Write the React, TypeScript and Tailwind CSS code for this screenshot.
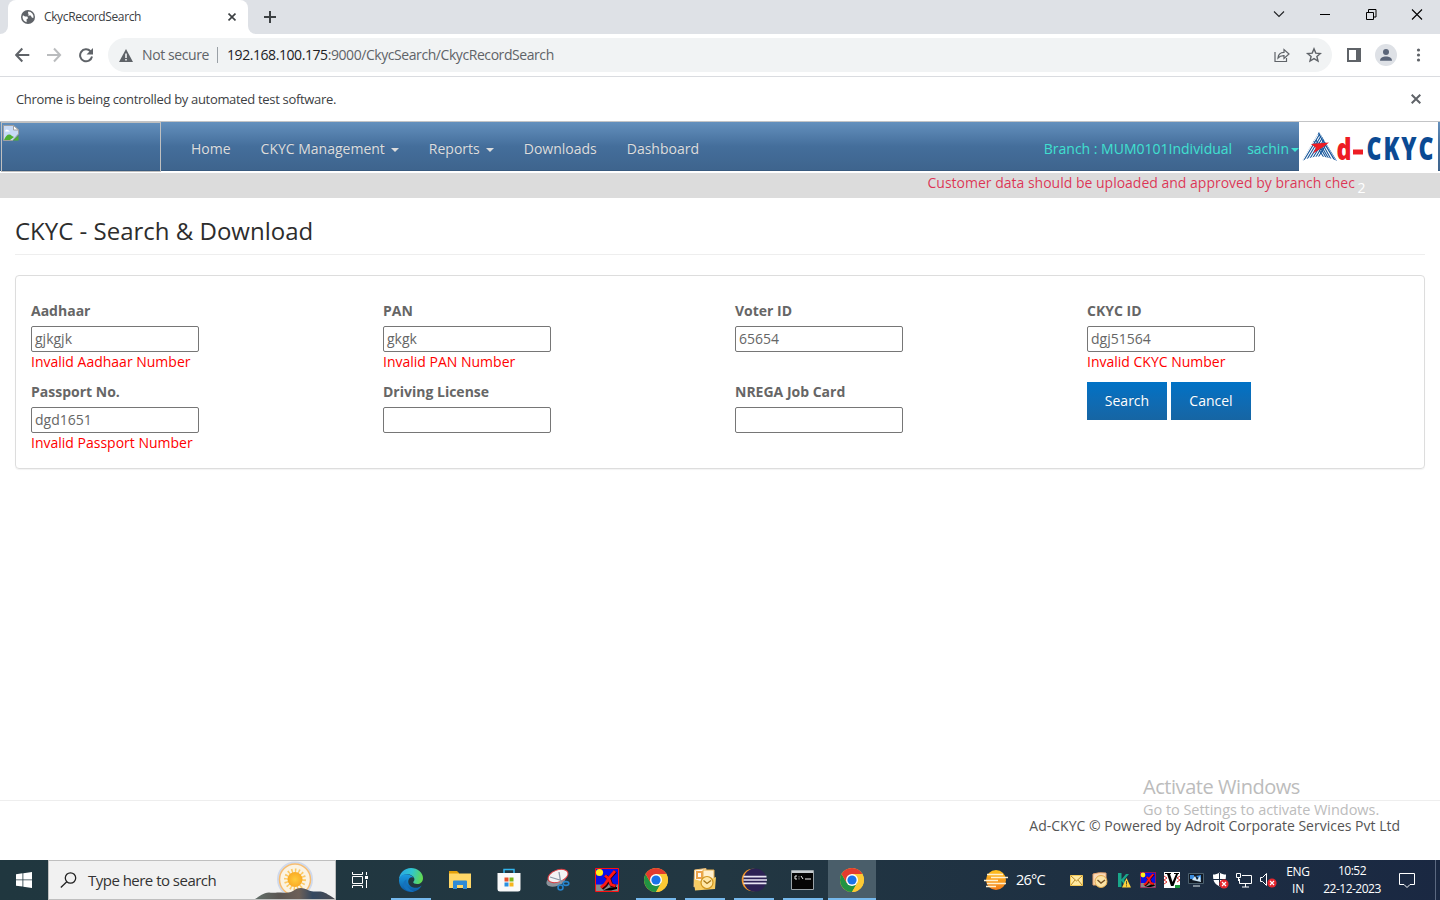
import React from "react";

const ui = "font-['Open_Sans','Noto_Sans',sans-serif]";

function Globe() {
  return (
    <svg width="14" height="14" viewBox="0 0 14 14">
      <circle cx="7" cy="7" r="7" fill="#5f6368" />
      <path d="M2 5.2 4 6.6h2.3l.8 1.6-1.5 1v3C3.4 11.8 1.6 9.600 1.500 7zM7.400 1.500l-.6 1.700 1 .9-.9 1.400h2.800l1.300 2.300h1.500A5.600 5.600 0 0 0 7.400 1.500z" fill="#fff" />
    </svg>
  );
}

function Cross({ size, color, w }: { size: number; color: string; w: number }) {
  return (
    <svg width={size} height={size} viewBox="0 0 10 10" className="block">
      <path d="M.7.7l8.600 8.600M9.300.7L.7 9.300" stroke={color} strokeWidth={w} fill="none" />
    </svg>
  );
}

function Chrome() {
  return (
    <svg width="24" height="24" viewBox="0 0 24 24">
      <circle cx="12" cy="12" r="12" fill="#fcc934" />
      <path d="M1.610 6A12 12 0 0 0 12 24l5.200-9L12 12 6.800 15z" fill="#229342" />
      <path d="M22.390 6A12 12 0 0 1 12 24l5.200-9L18 9.500 12 6z" fill="#fcc934" />
      <path d="M1.610 6A12 12 0 0 1 22.390 6H12L6.800 15z" fill="#e33b2e" />
      <circle cx="12" cy="12" r="6" fill="#fff" />
      <circle cx="12" cy="12" r="4.600" fill="#1a73e8" />
    </svg>
  );
}

function Edge() {
  return (
    <svg width="24" height="24" viewBox="0 0 24 24">
      <defs>
        <linearGradient id="eg1" x1="0" y1="0.300" x2="1" y2="0.500">
          <stop offset="0" stopColor="#2aa7e4" />
          <stop offset=".5" stopColor="#30c5d0" />
          <stop offset="1" stopColor="#62da4e" />
        </linearGradient>
        <linearGradient id="eg2" x1="0" y1="0" x2="0" y2="1">
          <stop offset="0" stopColor="#1b9de2" />
          <stop offset="1" stopColor="#0c59a4" />
        </linearGradient>
      </defs>
      <path d="M0 12C0 5 5.500 0 12 0s12 4.500 12 10.200c0 3.600-2.800 5.800-5.800 5.800-2.500 0-4-.9-4-1.700 0-.7 1.200-.9 1.200-3C15.400 8 11 6 7.500 6.200 3 6.500.6 9.500 0 12z" fill="url(#eg1)" />
      <path d="M0 12c.6-4 4-6 7.500-5.800 3.300.1 6 1.800 7.300 3.600-1-.7-3.300-.8-4.600.8-2.600 3.400.3 8.600 5.300 9.200 3 .3 5-.6 7.100-2.300C20.600 21.700 16.500 24 12 24 5 24-.3 18.600 0 12z" fill="url(#eg2)" />
      <path d="M7.600 11.500c-1.200 5.500 2 10.500 7.400 12-4 .8-8.500-.7-10.200-4.400C3.400 16 4.700 12.700 7.600 11.500z" fill="#1572bd" />
    </svg>
  );
}

function Explorer() {
  return (
    <svg width="24" height="24" viewBox="0 0 24 24">
      <path d="M1 3h8l2 2v3H1z" fill="#e3a008" />
      <path d="M1 5.500h22V20H1z" fill="#ffd767" />
      <path d="M5 13.500q0-1 1-1h12q1 0 1 1V21h-4v-4H9v4H5z" fill="#2f8bd6" />
    </svg>
  );
}

function Store() {
  return (
    <svg width="24" height="24" viewBox="0 0 24 24">
      <path d="M7 6V1.500h10V6" fill="none" stroke="#33b6ef" strokeWidth="1.500" />
      <path d="M.5 5h23v16q0 2.500-2.500 2.500H3Q.5 23.500.5 21z" fill="#fafafa" />
      <path d="M7.500 9.500h4v4h-4z" fill="#e8502a" />
      <path d="M12.500 9.500h4v4h-4z" fill="#7cb518" />
      <path d="M7.500 14.500h4v4h-4z" fill="#2a90e0" />
      <path d="M12.500 14.500h4v4h-4z" fill="#f6b51c" />
    </svg>
  );
}

function Snip() {
  return (
    <svg width="24" height="24" viewBox="0 0 24 24">
      <ellipse cx="10" cy="12.500" rx="10" ry="5.500" transform="rotate(-20 10 12.500)" fill="#8b939b" />
      <ellipse cx="12" cy="8" rx="10.500" ry="6" transform="rotate(-20 12 8)" fill="#f3f3f4" stroke="#d93a3f" />
      <path d="M4 9l13 4M13 4l2 12" stroke="#8a98a8" strokeWidth="1.300" />
      <circle cx="14.500" cy="19.500" r="2.500" fill="none" stroke="#2684cc" strokeWidth="1.600" />
      <ellipse cx="20" cy="15.500" rx="2.800" ry="1.900" fill="none" stroke="#2684cc" strokeWidth="1.600" />
    </svg>
  );
}

function RedX({ size }: { size: number }) {
  return (
    <svg width={size} height={size} viewBox="0 0 24 24">
      <path d="M.5.5h23v23H.5z" fill="#0a10e8" stroke="#f11" />
      <path d="M1 16.500h22V23H1z" fill="#8a8a8a" />
      <path d="M8 22.500l7-3 7-.5v2l-6 1.500z" fill="#000" />
      <circle cx="4.500" cy="4.500" r="3.600" fill="#ffef1a" />
      <path d="M20.500 3.500 14.500 10 11 17l-4 3.500M10.500 8l4 3.500 2 5.500 4.500 1.500" stroke="#300" strokeWidth="3.600" fill="none" />
      <path d="M20 3 14 10 10 16l-4 3.500M10 7.500l4 3.500 2 5.500 4.500 1.500" stroke="#ff1616" strokeWidth="2.800" fill="none" />
    </svg>
  );
}

function Outlook() {
  return (
    <svg width="24" height="24" viewBox="0 0 24 24">
      <path d="M1.500 2 13 .5V14L1 19z" fill="#fffaf0" stroke="#e9b96f" />
      <path d="M4 4h5v6H4z" fill="none" stroke="#eba24b" strokeWidth="2" />
      <path d="M10 2h11v10H10z" fill="#fff0ce" stroke="#e8b04c" />
      <path d="M1 11l10 3 12-5-1 12-20 1.500z" fill="#f8cd63" />
      <circle cx="14" cy="14.500" r="6" fill="#ffe8a8" stroke="#cf951f" strokeWidth="1.200" />
      <path d="M10.500 12.500l3.500 3 4-3" stroke="#a57416" strokeWidth="1.300" fill="none" />
    </svg>
  );
}

function Eclipse() {
  return (
    <svg width="26" height="24" viewBox="0 0 26 24">
      <circle cx="12" cy="12" r="11.300" fill="#f79a2b" />
      <circle cx="14" cy="12" r="11.500" fill="#2c2255" />
      <path d="M2.500 8.700h23M2.500 12h23.500M2.500 15.300h23" stroke="#e8e6f4" strokeWidth="1.700" />
    </svg>
  );
}

function Cmd() {
  return (
    <svg width="24" height="20" viewBox="0 0 24 20">
      <path d="M.5.500h22v19H.5z" fill="#050505" stroke="#9aa3a8" />
      <path d="M1 1h21v2H1z" fill="#c6ccd0" />
      <path d="M6 6H4v3h2M8 6.500v.8M8 8.500v.8M10 6l2 3M14 9h6" stroke="#eee" fill="none" />
    </svg>
  );
}

function Slot({ children, state }: { children: React.ReactNode; state?: "open" | "active" }) {
  return (
    <div className={`relative mr-px flex h-10 w-12 items-center justify-center ${state === "active" ? "bg-[#4a5e6a]" : ""}`}>
      {children}
      {state && <span className={`absolute bottom-0 h-0.5 bg-[#76b9ed] ${state === "active" ? "w-12" : "w-10"}`} />}
    </div>
  );
}

function Tray({ children }: { children: React.ReactNode }) {
  return <div className="flex h-10 w-6 shrink-0 items-center justify-center">{children}</div>;
}

function BrowserChrome() {
  return (
    <header className={`${ui} shrink-0`}>
      <div className="flex h-[34px] bg-[#dee1e6]">
        <div className="h-full w-2 bg-white"><div className="h-full w-full rounded-br-lg bg-[#dee1e6]" /></div>
        <div className="flex w-60 items-center rounded-t-lg bg-white pl-[13px]">
          <Globe />
          <span className="ml-[9px] w-[184px] text-[12px] tracking-[-0.37px] text-[#3c4043]">CkycRecordSearch</span>
          <Cross size={8} color="#3c4043" w={2} />
        </div>
        <div className="h-full w-2 bg-white"><div className="h-full w-full rounded-bl-lg bg-[#dee1e6]" /></div>
        <svg width="12" height="12" className="ml-2 mt-[11px]"><path d="M6 0v12M0 6h12" stroke="#3c4043" strokeWidth="2" /></svg>
        <svg width="170" height="14" viewBox="-20 0 170 14" fill="none" stroke="#000" className="ml-auto mt-[8px]">
          <path d="M-16 3.500l5 5 5-5" stroke="#202124" strokeWidth="1.100" />
          <path d="M30 6.500h10" />
          <path d="M76.500 4.500h7v7h-7zM78.500 4V1.500h7.500V9h-2" />
          <path d="M122 1.500l10 10M132 1.500l-10 10" strokeWidth="1.100" />
        </svg>
      </div>
      <div className="flex h-[43px] items-center border-b border-[#dadce0] bg-white">
        <svg width="80" height="16" viewBox="0 0 80 16" className="ml-[15px]" fill="none" strokeWidth="2">
          <path d="M14 8H1M7 1.500.9 8 7 14.500" stroke="#5f6368" transform="translate(.3 0)" />
          <path d="M32 8h13M39 1.500 45.100 8 39 14.500" stroke="#babcbe" />
          <path d="M75.500 4.200A6 6 0 1 0 77 9.500" stroke="#5f6368" />
          <path d="M78 1v6.500h-6.500z" fill="#5f6368" />
        </svg>
        <div className="ml-[13px] flex h-[34px] w-[1224px] items-center rounded-full bg-[#f1f3f4] pl-[11px] pr-[10px]">
          <svg width="14" height="13" viewBox="0 0 14 13"><path d="M7 0l7 13H0z" fill="#5f6368" /><path d="M7 4.500V9M7 10v1.600" stroke="#fff" strokeWidth="1.500" /></svg>
          <span className="ml-[9px] w-[75px] whitespace-nowrap pb-0.5 text-[14px] tracking-[-0.41px] text-[#5f6368]">Not secure</span>
          <span className="h-4 w-px bg-[#9aa0a6]" />
          <span className="ml-[9px] whitespace-nowrap pb-0.5 text-[14px] tracking-[-0.43px] text-[#5f6368]"><span className="text-[#202124]">192.168.100.175</span>:9000/CkycSearch/CkycRecordSearch</span>
          <svg width="48" height="16" viewBox="0 0 48 16" className="ml-auto" fill="none" stroke="#5f6368">
            <path d="M1 5v9.500h11.500V11" strokeWidth="1.200" />
            <path d="M4 11c.3-4 2.500-5.500 6-5.600V2.500L15 7l-5 4.500V8.600C7 8.500 5.500 9.200 4 11z" strokeWidth="1.200" />
            <path d="M40 1.900l1.800 4.200 4.600.4-3.500 3 1.100 4.500L40 11.600 36 14l1.100-4.500-3.500-3 4.600-.4z" strokeWidth="1.400" />
          </svg>
        </div>
        <svg width="80" height="22" viewBox="0 0 80 22" className="ml-[14px]">
          <path d="M2 5h10v12H2z" fill="none" stroke="#5f6368" strokeWidth="2" /><path d="M10 4h5v14h-5z" fill="#5f6368" />
          <circle cx="40" cy="11" r="11" fill="#dee1e6" /><circle cx="40" cy="8" r="3" fill="#5a6478" /><path d="M34 16.800c0-3 3-4.300 6-4.300s6 1.300 6 4.300z" fill="#5a6478" />
          <g fill="#5f6368"><circle cx="72.500" cy="6" r="1.600" /><circle cx="72.500" cy="11" r="1.600" /><circle cx="72.500" cy="16" r="1.600" /></g>
        </svg>
      </div>
      <div className="flex h-[45px] items-center justify-between border-b border-[#c3c4c6] bg-white pl-4 pr-[19px]">
        <span className="pt-px text-[13px] tracking-[-0.32px] text-[#3c4043]">Chrome is being controlled by automated test software.</span>
        <Cross size={10} color="#5f6368" w={2} />
      </div>
    </header>
  );
}

const Caret = () => <span className="ml-1.5 inline-block border-x-4 border-t-4 border-x-transparent border-t-current align-middle" />;

function BrandLogo() {
  return (
    <svg width="139" height="51" viewBox="0 0 139 51" className="shrink-0 self-start">
      <path d="M0 0h139v51H0z" fill="#fff" />
      <clipPath id="tri"><path d="M20 10 38 39Q20 30 3 39z" /></clipPath>
      <g clipPath="url(#tri)" stroke="#15569b" strokeWidth="1.100">
        <path d="M2 39 20 9M4.500 39 22.500 9M7 39 25 9M9.500 39 27.500 9M12 39 30 9M14.500 39 32.500 9M17 39 35 9" />
        <path d="M20 9 38 39M18 9 36 39M26 22 41 47M23 21 33 39M20 20 31 39M17 18 29 39M14 18 27 39" />
      </g>
      <path d="M12 22l18-1.500-5 4-11 7 3-5.500z" fill="#ed1c24" />
      <g fontFamily="'Open Sans',sans-serif" fontWeight="800">
        <g transform="translate(37.500 37.500) scale(.78 1)"><text fontSize="30" fill="#ed1c24">d</text></g>
        <path d="M54 27.500h10v5H54z" fill="#ed1c24" />
        <g transform="translate(67.500 37.500) scale(.72 1)"><text fontSize="32" textLength="93" lengthAdjust="spacing" fill="#0b4a93">CKYC</text></g>
      </g>
    </svg>
  );
}

function NavBar() {
  return (
    <>
      <nav className="flex h-[49px] shrink-0 items-center bg-linear-to-b from-[#6490bd] via-[#446e9b] to-[#3e648d] text-[14px] text-[#dddddd] shadow-[inset_0_-1px_0_#385a7e]">
        <div className="ml-px h-[50px] w-40 shrink-0 self-start border border-[#c0c0c0] pl-px pt-0.5">
          <svg width="16" height="16" viewBox="0 0 16 16">
            <path d="M.5.5h10l5 4.500V9l-6 6.500h-9z" fill="#c7daf6" stroke="#a0a0a0" />
            <path d="M10.500.5V5h5z" fill="#fff" stroke="#a0a0a0" />
            <path d="M2 6.500q1-3 3-1.500l2 1.500z" fill="#fff" />
            <path d="M1 15c2-5 5-7 8-4l2 1-4 3z" fill="#4faf32" />
            <path d="M10 15.500l5.500-5v5z" fill="#4faf32" />
          </svg>
        </div>
        <div className="ml-[30px] flex gap-[30px] whitespace-nowrap pt-1 [text-shadow:0_-1px_0_rgba(0,0,0,.1)]">
          <span>Home</span>
          <span>CKYC Management<Caret /></span>
          <span>Reports<Caret /></span>
          <span>Downloads</span>
          <span>Dashboard</span>
        </div>
        <div className="ml-auto flex whitespace-nowrap pt-1 text-[#40e0d0]">
          <span className="mr-[15px]">Branch : MUM0101Individual</span>
          <span>sachin<span className="ml-0.5 inline-block border-x-4 border-t-4 border-x-transparent border-t-current align-middle" /></span>
        </div>
        <BrandLogo />
        <span className="w-0.5 shrink-0" />
      </nav>
      <div className="mt-0.5 flex h-[25px] shrink-0 bg-[#dcdcdc] pl-[927.500px] text-[14px] leading-5">
        <span className="w-[428px] whitespace-nowrap text-[#dc143c]/85">Customer data should be uploaded and approved by branch chec</span>
        <span className="ml-0.5 pt-[5px] text-white">2</span>
      </div>
    </>
  );
}

type FieldProps = { label: string; value?: string; error?: string };

function Field({ label, value, error }: FieldProps) {
  return (
    <div className="h-[81px]">
      <div className="mb-[5px] h-5 font-bold leading-5">{label}</div>
      <div className="h-[26px] w-[168px] rounded-[2px] border border-[#767676] bg-white px-[3px] leading-6 text-[#666]">{value}</div>
      <div className="leading-5 text-[#ff0000]">{error}</div>
    </div>
  );
}

const btn = "h-[38px] w-20 bg-linear-to-b from-[#0072c6] to-[#1665a3] pb-0.5 text-white [text-shadow:0_-1px_0_rgba(0,0,0,.1)]";

function SearchPage() {
  return (
    <main className="flex min-h-0 flex-1 flex-col bg-white px-[15px] text-[14px] text-[#666]">
      <h1 className="h-[57px] border-b border-[#eeeeee] pt-[17px] text-[24px] leading-8 text-[#2d2d2d]">CKYC - Search &amp; Download</h1>
      <section className="mt-5 grid h-[194px] shrink-0 grid-cols-[repeat(4,352px)] content-start overflow-hidden rounded border border-[#dddddd] pl-[15px] pt-[25px] shadow-[0_1px_1px_rgba(0,0,0,.05)]">
        <Field label="Aadhaar" value="gjkgjk" error="Invalid Aadhaar Number" />
        <Field label="PAN" value="gkgk" error="Invalid PAN Number" />
        <Field label="Voter ID" value="65654" />
        <Field label="CKYC ID" value="dgj51564" error="Invalid CKYC Number" />
        <Field label="Passport No." value="dgd1651" error="Invalid Passport Number" />
        <Field label="Driving License" />
        <Field label="NREGA Job Card" />
        <div className="flex gap-1">
          <button className={btn}>Search</button>
          <button className={btn}>Cancel</button>
        </div>
      </section>
    </main>
  );
}

function Footer() {
  return (
    <footer className="relative h-[60px] shrink-0 border-t border-[#eeeeee] bg-white pr-10 pt-[15px] text-right text-[14px] leading-5 text-[#555]">
      Ad-CKYC © Powered by Adroit Corporate Services Pvt Ltd
      <div className={`${ui} absolute left-[1143px] top-[-28px] whitespace-nowrap text-left text-[#bcbcbc]`}>
        <div className="text-[20px] leading-7 tracking-[-0.45px]">Activate Windows</div>
        <div className="text-[14.500px] leading-[18px] tracking-[-0.04px]">Go to Settings to activate Windows.</div>
      </div>
    </footer>
  );
}

function Taskbar() {
  return (
    <div className={`${ui} flex h-10 shrink-0 items-center bg-linear-to-r from-[#20373f] via-[#223742] to-[#1a2842] text-white`}>
      <div className="flex w-12 justify-center">
        <svg width="16" height="16" viewBox="0 0 16 16" fill="#fff"><path d="M0 2.200 6.500 1.300v6.200H0zM7.300 1.200 16 0v7.500H7.300zM0 8.300h6.500v6.300L0 13.700zM7.300 8.300H16V16l-8.700-1.200z" /></svg>
      </div>
      <div className="relative flex h-10 w-72 items-center border border-[#bfbfbf] bg-[#f1f1f1] pl-[11px]">
        <svg width="17" height="16" viewBox="0 0 17 16" fill="none" stroke="#222" strokeWidth="1.300"><circle cx="10.500" cy="6" r="5.200" /><path d="M6.800 9.700.8 15.500" /></svg>
        <span className="ml-[11px] whitespace-nowrap text-[15px] tracking-[-0.52px] text-[#333]">Type here to search</span>
        <svg width="80" height="38" viewBox="0 0 80 38" className="absolute right-0 top-0">
          <defs>
            <linearGradient id="hill" x1="0" x2="1"><stop offset="0" stopColor="#62706a" /><stop offset=".3" stopColor="#5a5552" /><stop offset=".55" stopColor="#6d6058" /><stop offset=".72" stopColor="#344860" /><stop offset="1" stopColor="#4a4a50" /></linearGradient>
            <radialGradient id="sun"><stop offset="0" stopColor="#ffcb3c" /><stop offset="1" stopColor="#faab24" /></radialGradient>
          </defs>
          <circle cx="40" cy="18.500" r="17" fill="#f3eee4" stroke="#cfd9ec" strokeWidth="2" />
          <circle cx="40" cy="18.500" r="15.500" fill="#fbf3e2" stroke="#f6bd72" strokeWidth="1.500" />
          <circle cx="40" cy="18.500" r="9" fill="none" stroke="#fbc964" strokeWidth="4" strokeDasharray="1.500 2" />
          <circle cx="40" cy="18.500" r="7.500" fill="url(#sun)" />
          <path d="M0 38c5-3 8-6 14-6.500 5 1 7-.5 12 0 7 .5 10 .5 15-3.500 5-2 8-1 13 1.500 5 2 9 0 14 1.500 3 1 6 3 12 7z" fill="url(#hill)" />
        </svg>
      </div>
      <div className="mr-[3px] flex w-12 justify-center">
        <svg width="16" height="16" viewBox="0 0 16 16" fill="none" stroke="#fff"><path d="M.5 0v2.500h10V0M.5 16v-2.500h10V16M.5 4.500h10v7H.5zM14.500 0v3M14.500 8v8" /><path d="M13 4h3v3h-3z" fill="#fff" stroke="none" /></svg>
      </div>
      <Slot state="open"><Edge /></Slot>
      <Slot><Explorer /></Slot>
      <Slot><Store /></Slot>
      <Slot><Snip /></Slot>
      <Slot><RedX size={24} /></Slot>
      <Slot state="open"><Chrome /></Slot>
      <Slot state="open"><Outlook /></Slot>
      <Slot state="open"><Eclipse /></Slot>
      <Slot state="open"><Cmd /></Slot>
      <Slot state="active"><Chrome /></Slot>
      <div className="ml-[107px] flex w-[80px] items-center">
        <svg width="24" height="20" viewBox="0 0 24 20">
          <defs><linearGradient id="wx" x1="0" y1="0" x2="0" y2="1"><stop offset="0" stopColor="#ffc21f" /><stop offset="1" stopColor="#f47c1c" /></linearGradient></defs>
          <circle cx="12" cy="10" r="10" fill="url(#wx)" />
          <path d="M3 4.500h16M7 7.500h17M0 10.500h14M3 13.500h19M2 16.500h10" stroke="#fff0cf" strokeWidth="1.300" />
        </svg>
        <span className="ml-2 text-[14.500px] tracking-[-0.8px]">26°C</span>
      </div>
      <Tray><svg width="13" height="11" viewBox="0 0 13 11"><path d="M.5.500h12v10H.5z" fill="#ffe9a2" stroke="#f4c957" /><path d="M1 1l5.500 5L12 1M1 10l4-5M12 10 8 5" stroke="#b88a2a" fill="none" /></svg></Tray>
      <Tray><svg width="16" height="16" viewBox="0 0 16 16"><path d="M1 2Q7 0 14 1v12H1z" fill="#f9d9b6" stroke="#e5a26c" /><circle cx="9" cy="9.500" r="6" fill="#fbe3a6" stroke="#e2a84a" /><path d="M5.500 8l3.500 3 4-3" stroke="#765022" strokeWidth="1.400" fill="none" /></svg></Tray>
      <Tray><svg width="14" height="16" viewBox="0 0 14 16"><path d="M1 1h3.500v14H1zM4 8l5-6h3L7 8l4 6H8z" fill="#19a68a" /><path d="M9.500 6 14 15.500H5z" fill="#ffd23c" /><path d="M9.500 9v3.500M9.500 13.300v1.200" stroke="#553" /></svg></Tray>
      <Tray><RedX size={16} /></Tray>
      <Tray><svg width="16" height="16" viewBox="0 0 16 16"><path d="M0 0h16v16H0z" fill="#fff" /><path d="M0 4l3 2-3 2 3 2-3 2M16 4l-3 2 3 2-3 2" stroke="#d33" fill="none" /><path d="M1 1h6v1H6l2.500 8L12 2h-2V1h5v1h-1L9.500 14H7L3 2H1z" fill="#000" /><path d="M11 13h5v3h-5z" fill="#1a9a3a" /></svg></Tray>
      <Tray><svg width="16" height="14" viewBox="0 0 16 14"><path d="M.5.500h15v10H.5z" fill="#111a25" stroke="#4c606e" /><path d="M2 2h4v4H2zM8 3l5-1v5z" fill="#3c8ee0" /><path d="M4 7l3-4 2 4 3-4 1 6z" fill="#cfe8f8" /><path d="M5 12h7v2H5z" fill="#7e8b97" /></svg></Tray>
      <Tray><svg width="17" height="17" viewBox="0 0 17 17"><path d="M7.500.5c2 1.500 4 2 6.500 2 0 6-1 9-6.500 12C2 11.500 1 8.500 1 2.500c2.500 0 4.500-.5 6.500-2z" fill="#fff" /><path d="M7.500 1v13M1 7.500h13" stroke="#1b2b40" /><circle cx="12" cy="12" r="4.600" fill="#e5262e" /><path d="M10 10l4 4M14 10l-4 4" stroke="#fff" strokeWidth="1.200" /></svg></Tray>
      <Tray><svg width="16" height="15" viewBox="0 0 16 15" fill="none" stroke="#fff"><path d="M6 2.500h9.500v8h-12V6M9.500 11v3M6 14h7M.5.500h4v4h-4zM2.500 5v3" /></svg></Tray>
      <Tray><svg width="17" height="16" viewBox="0 0 17 16" fill="none" stroke="#fff"><path d="M.5 5.500h2l4-4v12l-4-4h-2z" /><circle cx="12" cy="11" r="4.600" fill="#e5262e" stroke="none" /><path d="M10 9l4 4M14 9l-4 4" strokeWidth="1.200" /></svg></Tray>
      <div className="ml-px w-[34px] text-center text-[12px] leading-[17px] tracking-[-0.3px]">ENG<br />IN</div>
      <div className="w-[74px] whitespace-nowrap text-center text-[12px] leading-[18px] tracking-[-0.5px]">10:52<br />22-12-2023</div>
      <svg width="16" height="17" viewBox="0 0 16 17" className="ml-[10px]" fill="none" stroke="#fff"><path d="M.5 1.500h15v11H11l-3 3-3-3H.5z" /></svg>
      <span className="ml-5 h-10 w-px bg-[#5b6880]" />
    </div>
  );
}

export default function App() {
  return (
    <div className="flex h-[900px] w-[1440px] flex-col overflow-hidden bg-white font-['Open_Sans',sans-serif]">
      <BrowserChrome />
      <NavBar />
      <SearchPage />
      <Footer />
      <Taskbar />
    </div>
  );
}
